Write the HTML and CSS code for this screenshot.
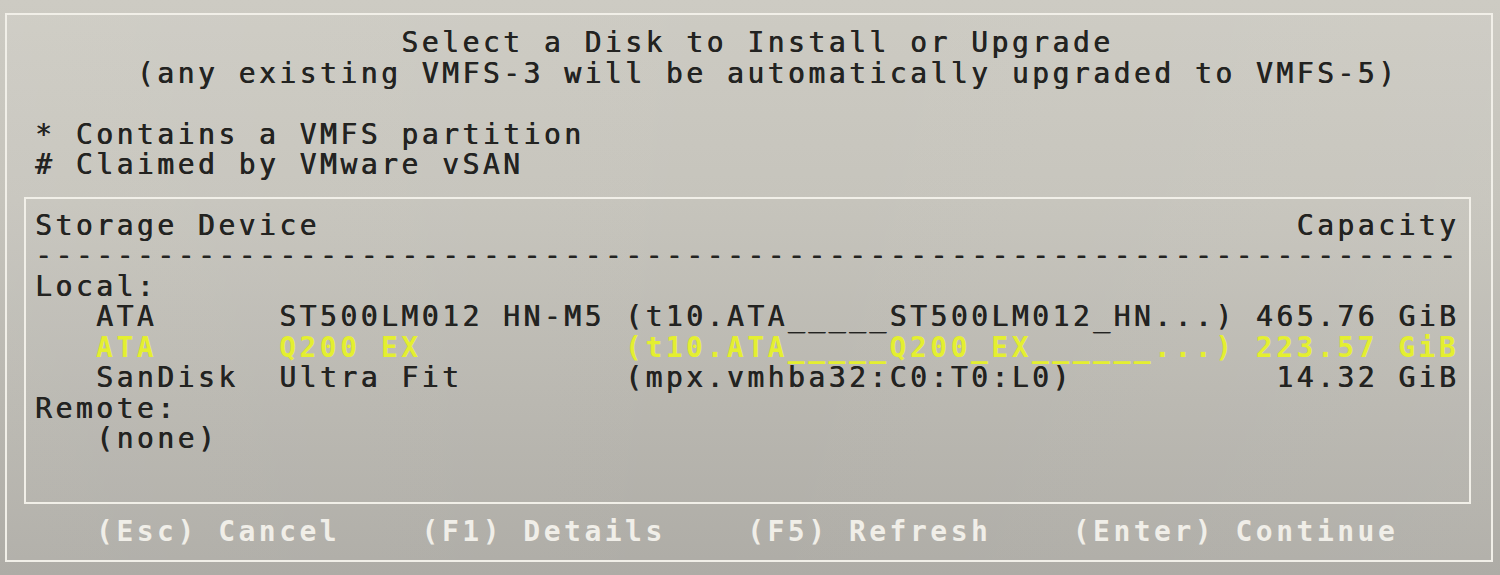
FILE: index.html
```html
<!DOCTYPE html>
<html lang="en">
<head>
<meta charset="utf-8">
<title>Select a Disk to Install or Upgrade</title>
<link rel="stylesheet" href="styles.css">
</head>
<body>
<div class="screen">
<pre class="term head">                  Select a Disk to Install or Upgrade
     (any existing VMFS-3 will be automatically upgraded to VMFS-5)

* Contains a VMFS partition
# Claimed by VMware vSAN</pre>
<div class="panel">
<pre class="term">Storage Device                                                Capacity
----------------------------------------------------------------------
Local:
   ATA      ST500LM012 HN-M5 (t10.ATA_____ST500LM012_HN...) 465.76 GiB
<span class="sel">   ATA      Q200 EX          (t10.ATA_____Q200_EX______...) 223.57 GiB</span>
   SanDisk  Ultra Fit        (mpx.vmhba32:C0:T0:L0)          14.32 GiB
Remote:
   (none)</pre>
</div>
<pre class="term keys">   (Esc) Cancel    (F1) Details    (F5) Refresh    (Enter) Continue</pre>
</div>
</body>
</html>
```
FILE: styles.css
```css
html, body {
  margin: 0;
  padding: 0;
}

body {
  width: 1500px;
  height: 575px;
  overflow: hidden;
  background: linear-gradient(180deg, #cdcbc3 0%, #c6c4bc 35%, #b9b7b0 70%, #aeaca6 100%);
}

.screen {
  box-sizing: border-box;
  width: 1488px;
  margin: 13px 0 0 5px;
  padding: 13px 0 13px 17px;
  border: 2px solid #f1efe8;
  background: linear-gradient(100deg, rgba(255,255,255,0.06) 0%, rgba(255,255,255,0) 50%, rgba(255,255,255,0.05) 100%);
}

.term {
  margin: 0;
  font-family: "DejaVu Sans Mono", "Liberation Mono", monospace;
  font-size: 28px;
  line-height: 30.5px;
  letter-spacing: 3.49px;
  color: #232321;
  text-shadow: 0.6px 0 0 currentColor;
  white-space: pre;
}

.head {
  padding-left: 11px;
}

.panel {
  box-sizing: border-box;
  width: 1447px;
  margin-top: 16px;
  padding: 12px 9px 47px 9px;
  border: 2px solid #f1efe8;
}

.sel {
  color: #e4ef30;
  font-weight: bold;
  text-shadow: none;
}

.keys {
  margin-top: 13px;
  padding-left: 11px;
  color: #f0eee8;
  font-weight: bold;
  text-shadow: none;
}
```
